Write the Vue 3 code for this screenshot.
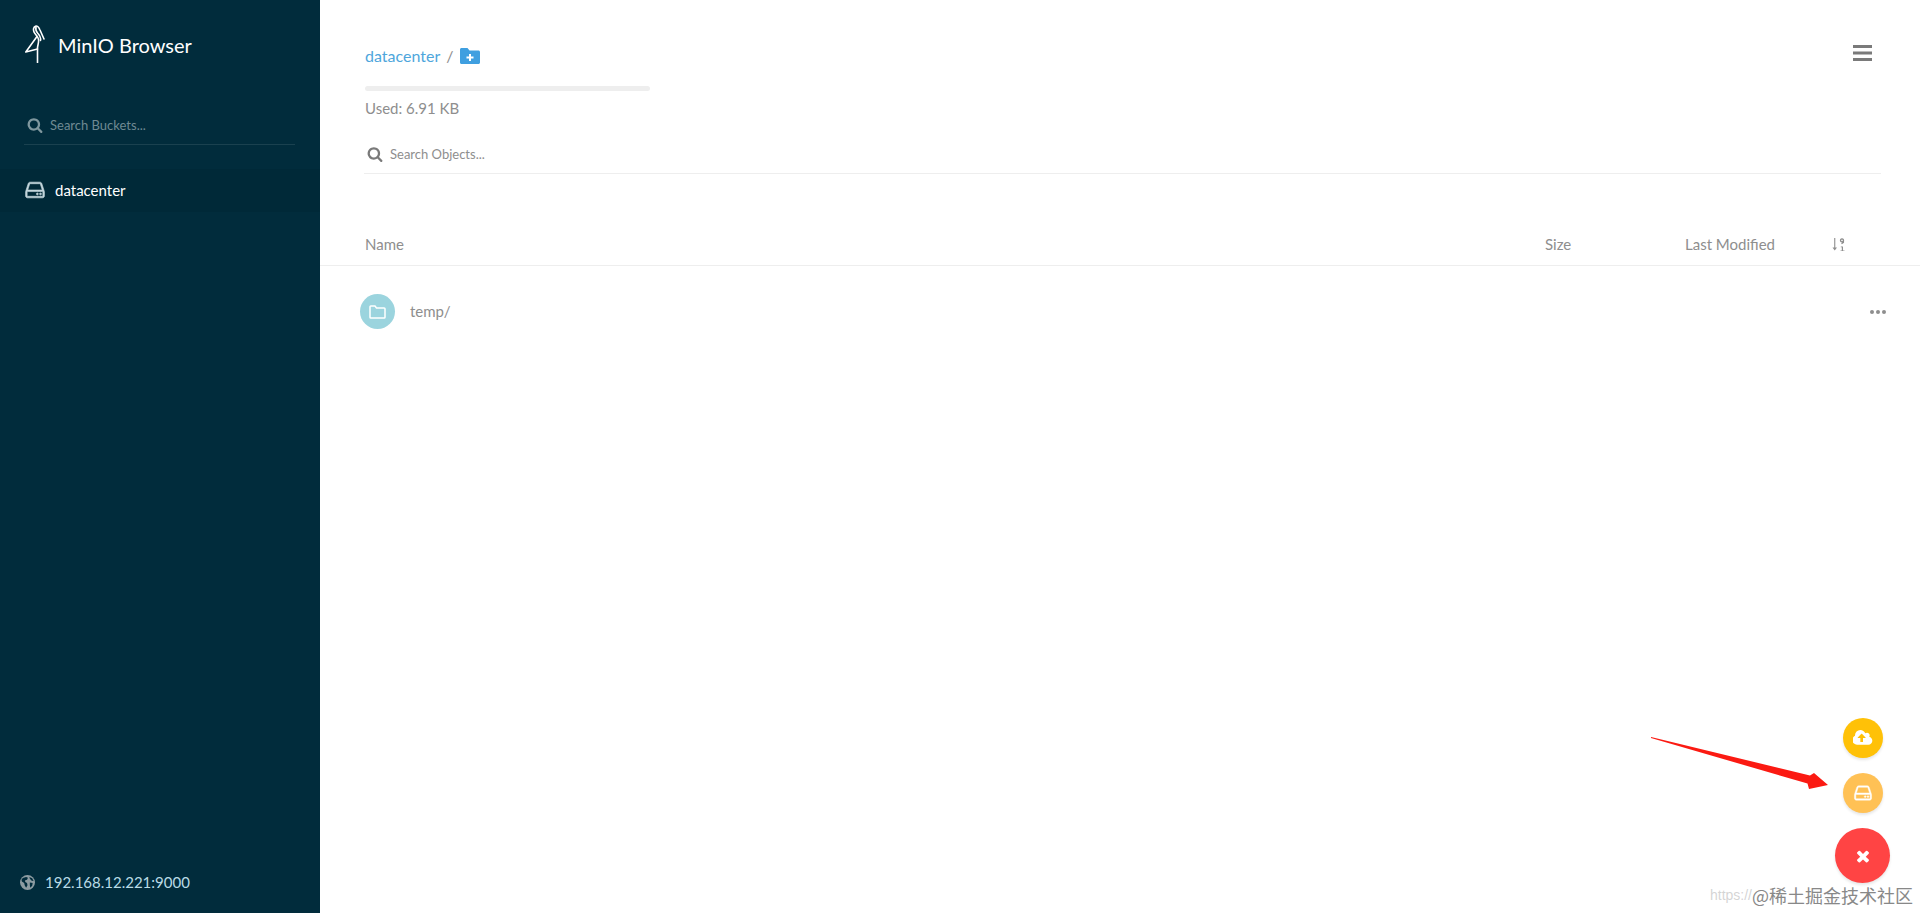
<template>
  <div class="browser">
    <!-- 左侧 bucket 列表 -->
    <aside class="sidebar">
      <div class="logo">
        <svg class="logo-bird" viewBox="0 0 22 38" fill="none" stroke="#fff" stroke-width="1.6" stroke-linejoin="round" stroke-linecap="round">
          <path d="M19 14 15 5C14 2.500 12 .6 10.500 1.200 8.500 2 8 4.500 9 7 10 9.500 13 11 13.500 14.500 14 18 12.500 20 12.500 23.500V37.500" />
          <path d="M11 2C10.500 4.500 11 6.500 12.500 8 14.500 10 16 12 15.500 15.500" />
          <path d="M12 11.500 .8 27 12.500 24" />
        </svg>
        <span class="logo-text">MinIO Browser</span>
      </div>

      <div class="bucket-search">
        <svg class="icon-search" viewBox="0 0 1792 1792"><path :d="icons.search" /></svg>
        <span>Search Buckets...</span>
      </div>

      <ul class="bucket-list">
        <li class="bucket active">
          <svg class="icon-hdd" viewBox="0 0 1792 1792"><path :d="icons.hdd" /></svg>
          <span>datacenter</span>
        </li>
      </ul>

      <div class="host">
        <svg class="icon-globe" viewBox="0 0 16 16">
          <circle cx="8" cy="8" r="8" fill="#8d9ca2" />
          <path fill="#012c3c" d="M3 3.200 6.500 2 8.500 3 7.500 5 5.500 5.500 5.500 7.500 7.500 8.500 8 11 6.500 13.500 5 11 4.500 8.500 2 7 1.600 5ZM10 2 13 3.500 14.500 6.500 12.500 6 10.500 4ZM10.500 8 13.500 8.500 13 11.500 11 13.500 10.500 11Z" />
        </svg>
        <span>192.168.12.221:9000</span>
      </div>
    </aside>

    <!-- 右侧对象列表 -->
    <main class="content">
      <header class="top">
        <div class="path-row">
          <div class="path">
            <a class="crumb">datacenter</a>
            <span class="sep">/</span>
            <svg class="icon-newfolder" viewBox="0 0 20 16">
              <path fill="#3f9fe0" d="M1.500 0H7.500L9.500 2.500H18.500C19.300 2.500 20 3.200 20 4V14.500C20 15.300 19.300 16 18.500 16H1.500C.7 16 0 15.300 0 14.500V1.500C0 .7 .7 0 1.500 0Z" />
              <path fill="#fff" d="M9 6H11V8.500H13.500V10.500H11V13H9V10.500H6.500V8.500H9Z" />
            </svg>
          </div>
          <svg class="icon-bars" viewBox="0 0 19 16"><path d="M0 0H19V3H0ZM0 6.500H19V9.500H0ZM0 13H19V16H0Z" /></svg>
        </div>
        <div class="usage-bar"></div>
        <div class="usage-text">Used: 6.91 KB</div>
        <div class="object-search">
          <svg class="icon-search dark" viewBox="0 0 1792 1792"><path :d="icons.search" /></svg>
          <span>Search Objects...</span>
        </div>
      </header>

      <div class="table-head">
        <span class="col-name">Name</span>
        <span class="col-size">Size</span>
        <span class="col-date">Last Modified</span>
        <svg class="icon-sort" viewBox="0 0 13 13">
          <path d="M2.200 0H3.300V9.500H5L2.750 12.500.5 9.500H2.200Z" />
          <path fill="none" stroke="#8e8e8e" stroke-width="1.300" d="M10 .8a1.500 1.500 0 1 0 .01 0ZM11.400 2.400V4.500L9.500 5.800" />
          <path d="M8.800 8.500H11V12.500H12.500V13H8.500V12.500H9.800V9.300H8.800Z" />
        </svg>
      </div>

      <div class="row">
        <div class="row-name">
          <div class="file-badge">
            <svg viewBox="0 0 17 14" fill="none" stroke="#fff" stroke-width="1.500"><path d="M1.800 1H6L7.500 3H15.200C15.700 3 16 3.300 16 3.800V12.200C16 12.700 15.700 13 15.200 13H1.800C1.300 13 1 12.700 1 12.200V1.800C1 1.300 1.300 1 1.800 1Z" /></svg>
          </div>
          <span>temp/</span>
        </div>
        <div class="dots"><i></i><i></i><i></i></div>
      </div>
    </main>

    <!-- 右下角操作按钮 -->
    <div class="fab-stack">
      <button class="fab upload">
        <svg viewBox="0 0 1920 1792"><path :d="icons.cloud" /></svg>
      </button>
      <button class="fab bucket-add">
        <svg viewBox="0 0 1792 1792"><path :d="icons.hdd" /></svg>
      </button>
      <button class="fab close">
        <svg viewBox="0 0 1792 1792"><path :d="icons.times" /></svg>
      </button>
    </div>

    <!-- 截图上的标注箭头 -->
    <svg class="arrow" viewBox="0 0 180 54">
      <path fill="#fb1a12" d="M0 0 159 38.500 163 36 177 48 158 52 156.500 46.500 0 1Z" />
    </svg>

    <div class="watermark">
      <span class="wm-url">https://</span>
      <span class="wm-name">@稀土掘金技术社区</span>
    </div>
  </div>
</template>

<script setup>
const icons = {
  search: 'M1216 832q0-185-131.5-316.5t-316.5-131.5-316.5 131.5-131.5 316.5 131.5 316.5 316.5 131.5 316.5-131.5 131.5-316.5zm512 832q0 52-38 90t-90 38q-54 0-90-38l-343-342q-179 124-399 124-143 0-273.5-55.5t-225-150-150-225-55.5-273.5 55.5-273.5 150-225 225-150 273.5-55.5 273.5 55.5 225 150 150 225 55.5 273.5q0 220-124 399l343 343q37 37 37 90z',
  hdd: 'M1168 1216q0 33-23.500 56.500t-56.500 23.500-56.500-23.500-23.500-56.500 23.500-56.500 56.500-23.500 56.500 23.500 23.500 56.500zm256 0q0 33-23.500 56.500t-56.500 23.500-56.500-23.500-23.500-56.500 23.500-56.500 56.500-23.500 56.500 23.500 23.500 56.500zm112 160v-320q0-13-9.500-22.500t-22.500-9.500h-1216q-13 0-22.500 9.500t-9.500 22.500v320q0 13 9.500 22.500t22.500 9.500h1216q13 0 22.500-9.500t9.500-22.500zm-1230-480h1180l-157-482q-4-13-16-21.500t-26-8.500h-782q-14 0-26 8.500t-16 21.500zm1358 160v320q0 66-47 113t-113 47h-1216q-66 0-113-47t-47-113v-320q0-25 16-75l197-606q17-53 63-86t101-33h782q55 0 101 33t63 86l197 606q16 50 16 75z',
  cloud: 'M1216 864q0-14-9-23l-352-352q-9-9-23-9t-23 9l-351 351q-10 12-10 24 0 14 9 23t23 9h224v352q0 13 9.500 22.500t22.500 9.500h192q13 0 22.500-9.500t9.500-22.500v-352h224q13 0 22.500-9.500t9.500-22.500zm640 288q0 159-112.500 271.500t-271.500 112.500h-1088q-185 0-316.500-131.500t-131.500-316.500q0-130 70-240t188-165q-2-30-2-43 0-212 150-362t362-150q156 0 285.500 87t188.500 231q71-62 166-62 106 0 181 75t75 181q0 76-41 138 130 31 213.500 135.500t83.500 238.500z',
  times: 'M1490 1322q0 40-28 68l-136 136q-28 28-68 28t-68-28l-294-294-294 294q-28 28-68 28t-68-28l-136-136q-28-28-28-68t28-68l294-294-294-294q-28-28-28-68t28-68l136-136q28-28 68-28t68 28l294 294 294-294q28-28 68-28t68 28l136 136q28 28 28 68t-28 68l-294 294 294 294q28 28 28 68z'
}
</script>

<style>
html, body {
  margin: 0;
  background: #fff;
}
</style>

<style scoped>
.browser {
  position: relative;
  display: flex;
  width: 100%;
  height: 913px;
  overflow: hidden;
  font-family: Lato, "Noto Sans CJK SC", sans-serif;
  color: #8e8e8e;
}

.sidebar {
  width: 320px;
  flex-shrink: 0;
  display: flex;
  flex-direction: column;
  background: #012c3c;
}

.logo {
  display: flex;
  align-items: center;
  height: 38px;
  margin-top: 25px;
  padding-left: 25px;
}

.logo-bird {
  width: 22px;
  height: 38px;
}

.logo-text {
  margin-left: 11px;
  padding-top: 1px;
  font-size: 20px;
  color: #fff;
}

.bucket-search {
  display: flex;
  align-items: center;
  height: 35px;
  margin: 44px 25px 0 24px;
  padding: 0 0 2px 3px;
  border-bottom: 1px solid rgba(255, 255, 255, .1);
  font-size: 13px;
  color: #6f8a93;
}

.icon-search {
  width: 16px;
  height: 16px;
  margin-right: 7px;
  fill: #7f979e;
}

.icon-search.dark {
  fill: #7a7a7a;
}

.bucket-list {
  list-style: none;
  margin: 24px 0 0;
  padding: 0;
}

.bucket {
  display: flex;
  align-items: center;
  height: 43px;
  padding: 0 0 2px 24px;
  box-sizing: border-box;
  font-size: 15px;
  color: #fff;
}

.bucket.active {
  background: rgba(0, 0, 0, .05);
}

.icon-hdd {
  width: 22px;
  height: 22px;
  margin-right: 9px;
  fill: #c4d6dc;
  stroke: #c4d6dc;
  stroke-width: 50;
}

.host {
  display: flex;
  align-items: center;
  height: 62px;
  margin-top: auto;
  padding-left: 20px;
  font-size: 15px;
  color: #b9dbe6;
}

.icon-globe {
  width: 15px;
  height: 15px;
  margin-right: 10px;
}

.content {
  flex: 1;
  min-width: 0;
  background: #fff;
}

.top {
  padding: 42px 39px 0 44px;
}

.path-row {
  display: flex;
  align-items: center;
  justify-content: space-between;
  height: 26px;
  padding-right: 9px;
}

.path {
  display: flex;
  align-items: center;
  padding: 1px 0 0 1px;
  font-size: 16px;
}

.crumb {
  color: #4ea6dc;
}

.sep {
  margin: 0 7px 0 6px;
  color: #8e8e8e;
}

.icon-newfolder {
  width: 20px;
  height: 16px;
}

.icon-bars {
  width: 19px;
  height: 16px;
  margin-bottom: 4px;
  fill: #7a7a7a;
}

.usage-bar {
  width: 285px;
  height: 5px;
  margin: 18px 0 0 1px;
  border-radius: 3px;
  background: #eee;
}

.usage-text {
  height: 20px;
  margin: 7px 0 0 1px;
  line-height: 20px;
  font-size: 15px;
}

.object-search {
  display: flex;
  align-items: center;
  height: 38px;
  margin-top: 17px;
  padding-left: 3px;
  border-bottom: 1px solid #eee;
  font-size: 13px;
  color: #8e8e8e;
}

.table-head {
  display: flex;
  align-items: center;
  height: 42px;
  margin-top: 47px;
  padding: 2px 0 0 45px;
  border-bottom: 1px solid #eee;
  font-size: 15px;
}

.col-name {
  width: 1180px;
}

.col-size {
  width: 140px;
}

.col-date {
  width: 147px;
}

.icon-sort {
  width: 13px;
  height: 13px;
  fill: #8e8e8e;
}

.row {
  display: flex;
  align-items: center;
  justify-content: space-between;
  height: 35px;
  margin-top: 28px;
  padding: 0 34px 0 40px;
  font-size: 15px;
}

.row-name {
  display: flex;
  align-items: center;
  line-height: 33px;
}

.file-badge {
  display: flex;
  align-items: center;
  justify-content: center;
  width: 35px;
  height: 35px;
  margin-right: 15px;
  border-radius: 50%;
  background: #9bd4de;
}

.file-badge svg {
  width: 17px;
  height: 14px;
}

.dots {
  display: flex;
  gap: 2px;
}

.dots i {
  width: 4px;
  height: 4px;
  border-radius: 50%;
  background: #8e8e8e;
}

.fab-stack {
  position: absolute;
  right: 30px;
  bottom: 30px;
  display: flex;
  flex-direction: column;
  align-items: center;
}

.fab {
  display: flex;
  align-items: center;
  justify-content: center;
  width: 40px;
  height: 40px;
  margin-bottom: 15px;
  padding: 0;
  border: 0;
  border-radius: 50%;
  box-shadow: 0 2px 3px rgba(0, 0, 0, .1);
}

.fab svg {
  width: 20px;
  height: 20px;
  fill: #fff;
}

.upload {
  background: #ffc107;
}

.bucket-add {
  background: #ffc155;
}

.bucket-add svg {
  stroke: #fff;
  stroke-width: 40;
}

.close {
  width: 55px;
  height: 55px;
  margin-bottom: 0;
  background: #ff4444;
}

.close svg {
  width: 18px;
  height: 18px;
}

.arrow {
  position: absolute;
  left: 1651px;
  top: 737px;
  width: 180px;
  height: 54px;
}

.watermark {
  position: absolute;
  right: 7px;
  top: 882px;
  display: flex;
  align-items: center;
  white-space: nowrap;
}

.wm-url {
  width: 42px;
  font-family: "Liberation Sans", sans-serif;
  font-size: 14px;
  color: rgba(170, 170, 170, .5);
}

.wm-name {
  font-family: "Noto Sans CJK SC", sans-serif;
  font-size: 18px;
  line-height: 26px;
  color: #888;
}
</style>
